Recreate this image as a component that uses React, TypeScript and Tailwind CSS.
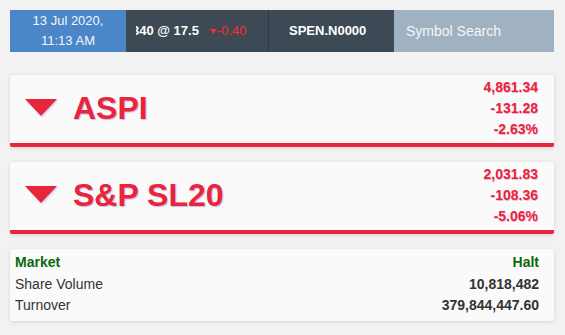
import React from "react";

const font = { fontFamily: '"Liberation Sans", Arial, sans-serif' };

function DownTri({ w, h, className }: { w: number; h: number; className?: string }) {
  return (
    <svg width={w} height={h} viewBox={`0 0 ${w} ${h}`} className={className}>
      <polygon points={`0,0 ${w},0 ${w / 2},${h}`} fill="currentColor" />
    </svg>
  );
}

function IndexCard({ name, vals }: { name: string; vals: string[] }) {
  return (
    <div className="flex h-[72px] items-stretch justify-between rounded-[2px] border-b-4 border-[#e8253a] bg-[#fafafa] shadow-[0_1px_4px_rgba(0,0,0,0.12)]">
      <div className="flex items-center pb-[3px] pl-[15px] text-[#e8253a]">
        <DownTri w={32} h={17} className="[filter:drop-shadow(1px_1px_1px_rgba(90,70,190,0.3))]" />
        <span className="ml-[16px] text-[32px] font-bold leading-none [text-shadow:1px_1px_1px_rgba(90,70,200,0.35)]">
          {name}
        </span>
      </div>
      <div className="pr-[16px] pt-[2px] text-right text-[14px] font-bold leading-[21px] text-[#e8253a] [text-shadow:0.5px_0.5px_0.5px_rgba(200,60,160,0.35)]">
        {vals.map((v) => (
          <div key={v}>{v}</div>
        ))}
      </div>
    </div>
  );
}

export default function App() {
  return (
    <div className="min-h-[335px] w-[565px] bg-[#f2f2f2] pt-[10px]" style={font}>
      <div className="ml-[10px] w-[544px]">
        <div className="flex h-[42px]">
          <div className="flex w-[116px] flex-col items-center justify-center bg-[#4a86c8] text-[13px] leading-[20.5px] text-[#f2f6fb]">
            <div>13 Jul 2020,</div>
            <div>11:13 AM</div>
          </div>
          <div className="flex w-[142px] items-center bg-[#3d4955] pl-[10px]">
            <div className="flex w-[122px] items-center overflow-hidden whitespace-nowrap">
              <span className="ml-[-4px] text-[13px] font-bold text-white">340 @ 17.5</span>
              <DownTri w={7} h={5} className="ml-[11px] text-[#ff2a2a]" />
              <span className="text-[13px] text-[#ff2a2a]">-0.40</span>
            </div>
          </div>
          <div className="w-px bg-[#2e3841]" />
          <div className="flex w-[125px] items-center bg-[#3d4955] pl-[20px] text-[13px] font-bold text-white">
            SPEN.N0000
          </div>
          <div className="flex flex-1 items-center bg-[#a0b1c2] pl-[12px] text-[14px] text-[#f4f6f9]">
            Symbol Search
          </div>
        </div>

        <div className="mt-[23px] flex flex-col gap-[15px]">
          <IndexCard name="ASPI" vals={["4,861.34", "-131.28", "-2.63%"]} />
          <IndexCard name="S&P SL20" vals={["2,031.83", "-108.36", "-5.06%"]} />
        </div>

        <div className="mt-[15px] rounded-[2px] bg-[#fafafa] pb-[4px] pl-[5px] pr-[15px] pt-[3px] text-[14px] leading-[21.5px] text-[#333] shadow-[0_1px_4px_rgba(0,0,0,0.12)]">
          <div className="flex justify-between font-bold text-[#0b6a0b]">
            <span>Market</span>
            <span>Halt</span>
          </div>
          <div className="flex justify-between">
            <span>Share Volume</span>
            <span className="font-bold">10,818,482</span>
          </div>
          <div className="flex justify-between">
            <span>Turnover</span>
            <span className="font-bold">379,844,447.60</span>
          </div>
        </div>
      </div>
    </div>
  );
}
